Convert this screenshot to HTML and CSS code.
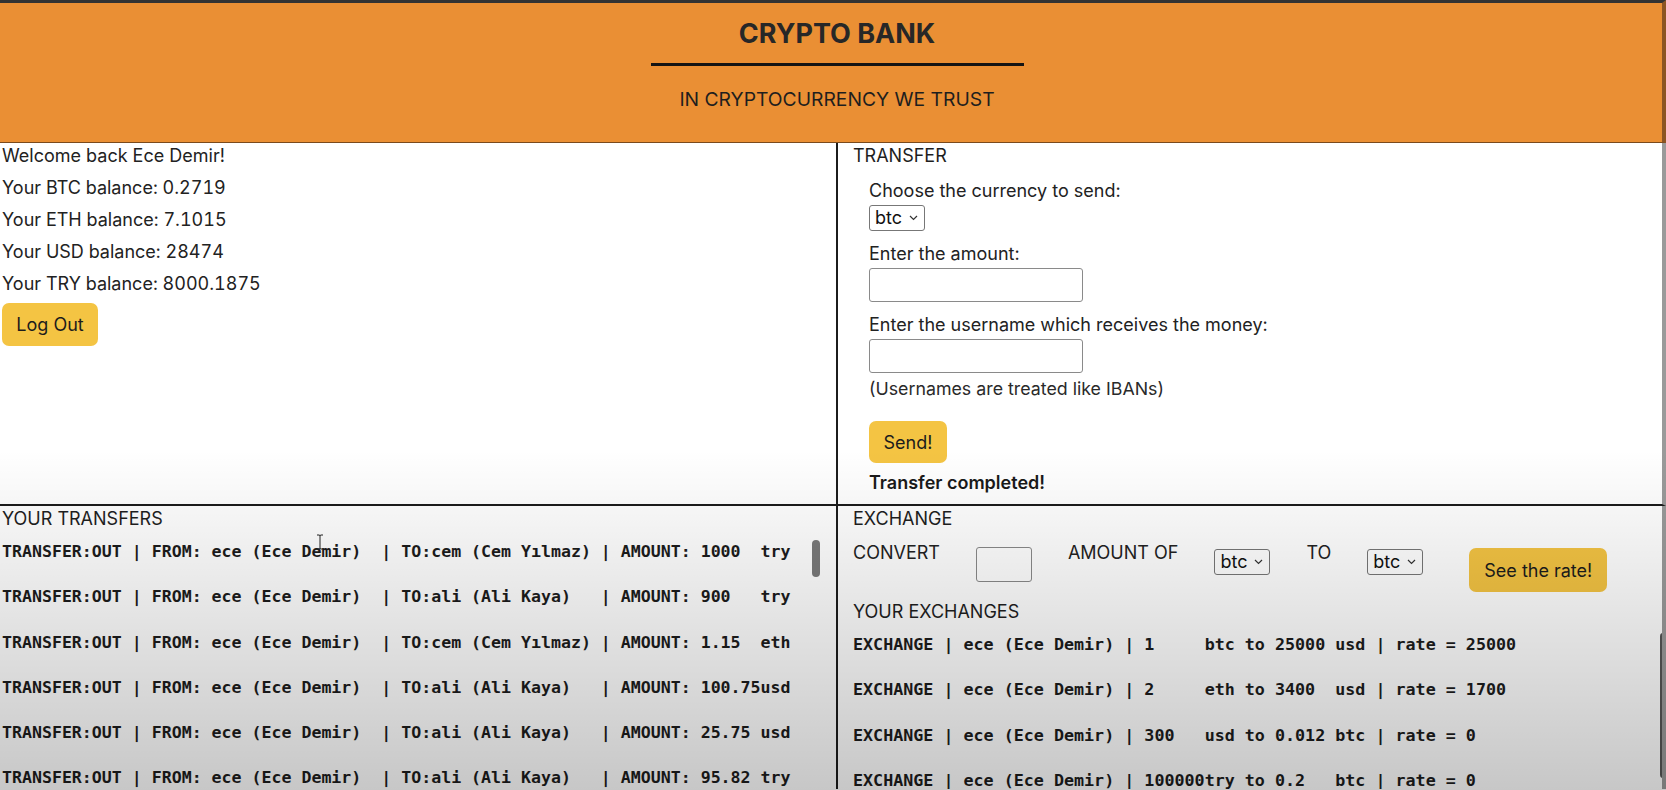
FILE: index.html
```html
<!DOCTYPE html>
<html lang="en">
<head>
<meta charset="utf-8">
<title>Crypto Bank</title>
<link rel="stylesheet" href="styles.css">
</head>
<body>
<header class="hero">
  <h1 class="hero-title">CRYPTO BANK</h1>
  <hr class="hero-rule">
  <p class="hero-motto">IN CRYPTOCURRENCY WE TRUST</p>
</header>
<main class="board">
  <section class="cell account">
    <p class="line">Welcome back Ece Demir!</p>
    <p class="line num">Your BTC balance: 0.2719</p>
    <p class="line num">Your ETH balance: 7.1015</p>
    <p class="line num">Your USD balance: 28474</p>
    <p class="line num">Your TRY balance: 8000.1875</p>
    <button class="btn btn-logout">Log Out</button>
  </section>
  <section class="cell transfer">
    <h2 class="cell-title">TRANSFER</h2>
    <form class="transfer-form">
      <label class="field-label">Choose the currency to send:</label>
      <span class="select-wrap">
        <select class="select"><option>btc</option></select>
        <svg class="chev" width="9" height="6" viewBox="0 0 9 6"><path d="M1 1 L4.5 4.5 L8 1" fill="none" stroke="#333" stroke-width="1.2"/></svg>
      </span>
      <label class="field-label gap">Enter the amount:</label>
      <input class="text-input" type="text">
      <label class="field-label gap">Enter the username which receives the money:</label>
      <input class="text-input" type="text">
      <span class="hint">(Usernames are treated like IBANs)</span>
      <button class="btn btn-send" type="button">Send!</button>
      <span class="status">Transfer completed!</span>
    </form>
  </section>
  <section class="cell history">
    <h2 class="cell-title">YOUR TRANSFERS</h2>
    <div class="rows">
      <div class="row">TRANSFER:OUT | FROM: ece (Ece Demir)  | TO:cem (Cem Yılmaz) | AMOUNT: 1000  try</div>
      <div class="row">TRANSFER:OUT | FROM: ece (Ece Demir)  | TO:ali (Ali Kaya)   | AMOUNT: 900   try</div>
      <div class="row">TRANSFER:OUT | FROM: ece (Ece Demir)  | TO:cem (Cem Yılmaz) | AMOUNT: 1.15  eth</div>
      <div class="row">TRANSFER:OUT | FROM: ece (Ece Demir)  | TO:ali (Ali Kaya)   | AMOUNT: 100.75usd</div>
      <div class="row">TRANSFER:OUT | FROM: ece (Ece Demir)  | TO:ali (Ali Kaya)   | AMOUNT: 25.75 usd</div>
      <div class="row">TRANSFER:OUT | FROM: ece (Ece Demir)  | TO:ali (Ali Kaya)   | AMOUNT: 95.82 try</div>
    </div>
    <span class="thumb thumb-left"></span>
    <svg class="ibeam" width="8" height="16" viewBox="0 0 8 16"><path d="M1 1 H3 Q4 1 4 2 V14 Q4 15 3 15 H1 M7 1 H5 Q4 1 4 2 M4 14 Q4 15 5 15 H7" fill="none" stroke="#222" stroke-width="1"/></svg>
  </section>
  <section class="cell exchange">
    <h2 class="cell-title">EXCHANGE</h2>
    <div class="convert">
      <span class="conv-label">CONVERT</span>
      <input class="small-input" type="text">
      <span class="conv-label">AMOUNT OF</span>
      <span class="select-wrap">
        <select class="select"><option>btc</option></select>
        <svg class="chev" width="9" height="6" viewBox="0 0 9 6"><path d="M1 1 L4.5 4.5 L8 1" fill="none" stroke="#333" stroke-width="1.2"/></svg>
      </span>
      <span class="conv-label">TO</span>
      <span class="select-wrap">
        <select class="select"><option>btc</option></select>
        <svg class="chev" width="9" height="6" viewBox="0 0 9 6"><path d="M1 1 L4.5 4.5 L8 1" fill="none" stroke="#333" stroke-width="1.2"/></svg>
      </span>
      <button class="btn btn-rate" type="button">See the rate!</button>
    </div>
    <h2 class="cell-title sub">YOUR EXCHANGES</h2>
    <div class="rows">
      <div class="row">EXCHANGE | ece (Ece Demir) | 1     btc to 25000 usd | rate = 25000</div>
      <div class="row">EXCHANGE | ece (Ece Demir) | 2     eth to 3400  usd | rate = 1700</div>
      <div class="row">EXCHANGE | ece (Ece Demir) | 300   usd to 0.012 btc | rate = 0</div>
      <div class="row">EXCHANGE | ece (Ece Demir) | 100000try to 0.2   btc | rate = 0</div>
    </div>
    <span class="thumb thumb-right"></span>
  </section>
</main>
<div class="fade"></div>
</body>
</html>
```
FILE: styles.css
```css
* { box-sizing: border-box; }
html, body { margin: 0; padding: 0; }
body {
  width: 1666px;
  height: 790px;
  overflow: hidden;
  position: relative;
  background: #fff;
  color: #222;
  font-family: Inter, "Noto Sans", "Liberation Sans", sans-serif;
  font-size: 18px;
}

.hero {
  height: 143px;
  background: #ea8f34;
  border-top: 3px solid #333;
  border-bottom: 1px solid #7a4a1c;
  border-right: 4px solid #8c5523;
  text-align: center;
  padding-top: 15px;
  padding-left: 12px;
  display: flex;
  flex-direction: column;
  align-items: center;
}
.hero-title {
  margin: 0;
  font-size: 27px;
  line-height: 32px;
  font-weight: 700;
  color: #272727;
}
.hero-rule {
  margin: 13px 0 0;
  width: 373px;
  height: 3px;
  border: none;
  background: #141414;
}
.hero-motto {
  margin: 21px 0 0;
  font-size: 19.3px;
  line-height: 24px;
  color: #1e1e1e;
}

.board {
  display: grid;
  grid-template-columns: 838px 1fr;
  grid-template-rows: 363px 1fr;
  height: 646px;
}
.cell { position: relative; overflow: hidden; }
.account, .history { border-right: 2px solid #1c1c1c; }
.account, .transfer { border-bottom: 2px solid #1c1c1c; }
.transfer, .exchange { border-right: 4px solid #9a9a9a; }

.line { margin: 0 0 6px; line-height: 26px; }
.line.num { font-variant-numeric: tabular-nums; }
.account { padding: 0 2px; }

.btn {
  border: none;
  border-radius: 7px;
  background: #f4c443;
  color: #1c1c1c;
  font-family: inherit;
  font-size: 18px;
  padding: 0;
}
.btn-logout { width: 96px; height: 43px; }

.cell-title {
  margin: 0;
  font-size: 18px;
  font-weight: 400;
  line-height: 26px;
  color: #1e1e1e;
}

.transfer { padding-left: 15px; }
.transfer-form {
  display: flex;
  flex-direction: column;
  align-items: flex-start;
  padding-left: 16px;
  margin-top: 9px;
}
.field-label { line-height: 26px; margin-bottom: 1px; }
.field-label.gap { margin-top: 10px; }
.select-wrap { position: relative; display: inline-block; height: 26px; }
.select {
  appearance: none;
  -webkit-appearance: none;
  width: 56px;
  height: 26px;
  border: 1px solid #777;
  border-radius: 3px;
  background: #fff;
  color: #111;
  font-family: inherit;
  font-size: 18px;
  padding: 0 0 0 5px;
  line-height: 24px;
}
.chev { position: absolute; right: 7px; top: 10px; }
.text-input {
  width: 214px;
  height: 34px;
  border: 1px solid #8a8a8a;
  border-radius: 3px;
  background: #fff;
}
.hint { line-height: 26px; margin-top: 3px; color: #2a2a2a; font-size: 17.8px; }
.btn-send { width: 78px; height: 42px; margin-top: 19px; }
.status { margin-top: 7px; line-height: 26px; font-weight: 600; color: #1a1a1a; }

.history { padding-left: 2px; }
.rows { margin-top: 10px; }
.row {
  font-family: "DejaVu Sans Mono", "Liberation Mono", monospace;
  font-weight: 700;
  font-size: 16.7px;
  line-height: 20px;
  white-space: pre;
  color: #1c1c1c;
  margin-bottom: 25.3px;
}
.history .row { font-size: 16.58px; }

.exchange { padding-left: 15px; }
.convert {
  display: flex;
  align-items: flex-start;
  gap: 36px;
  margin-top: 8px;
}
.conv-label { line-height: 26px; margin-top: 0; }
.convert .select-wrap { margin-top: 9px; }
.small-input {
  width: 56px;
  height: 35px;
  margin-top: 7px;
  border: 1px solid #8a8a8a;
  border-radius: 3px;
  background: #fff;
}
.btn-rate { width: 138px; height: 44px; margin-left: 10px; margin-top: 8px; }
.cell-title.sub { margin-top: 7px; }
.exchange .rows { margin-top: 9px; }

.thumb { position: absolute; border-radius: 4px; }
.thumb-left { left: 812px; top: 34px; width: 8px; height: 37px; background: #7a7a7a; }
.thumb-right { right: -4px; top: 127px; width: 6px; height: 145px; background: #555; }
.ibeam { position: absolute; left: 316px; top: 28px; }

.fade {
  position: absolute;
  left: 0;
  right: 0;
  top: 450px;
  height: 340px;
  background: linear-gradient(to bottom, rgba(0,0,0,0) 0%, rgba(0,0,0,0.04) 18%, rgba(0,0,0,0.22) 100%);
  pointer-events: none;
}
```
